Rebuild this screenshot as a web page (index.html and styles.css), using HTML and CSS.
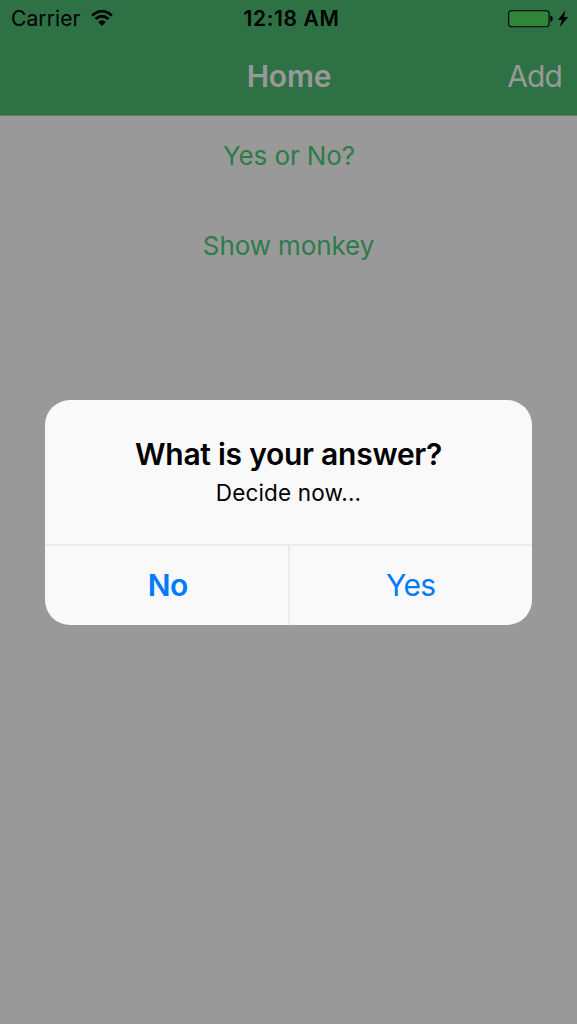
FILE: index.html
```html
<!DOCTYPE html>
<html lang="en">
<head>
<meta charset="utf-8">
<title>Home</title>
<link rel="stylesheet" href="styles.css">
</head>
<body>
<div class="screen">
  <header class="header">
    <div class="status">
      <div class="status-left">
        <span class="carrier">Carrier</span>
        <svg class="wifi" width="22" height="17" viewBox="0 0 22 17">
          <path d="M1.1 5.6Q11-3.2 20.9 5.6M4.5 9.1Q11 3.4 17.5 9.1" fill="none" stroke="#000" stroke-width="2.7"/>
          <path d="M7.2 12Q11 8.7 14.8 12L11 16Z"/>
        </svg>
      </div>
      <span class="time">12:18 AM</span>
      <div class="status-right">
        <svg width="61" height="19" viewBox="0 0 61 19">
          <rect x=".7" y="1.7" width="40.3" height="16" rx="2.6" fill="#31863c" stroke="#000" stroke-width="1.1"/>
          <path d="M42.3 6.5Q44.8 7 44.8 9.7T42.3 12.9Z"/>
          <path d="M57.4 1.3L50 10.9H53.9L51.7 18L60.4 8H56Z"/>
        </svg>
      </div>
    </div>
    <nav class="nav">
      <h1 class="nav-title">Home</h1>
      <a class="nav-add">Add</a>
    </nav>
  </header>
  <main class="links">
    <a class="link link-question">Yes or No?</a>
    <a class="link link-monkey">Show monkey</a>
  </main>
  <div class="overlay">
    <section class="alert" role="alertdialog">
      <div class="alert-body">
        <h2 class="alert-title">What is your answer?</h2>
        <p class="alert-text">Decide now...</p>
      </div>
      <div class="alert-actions">
        <button class="action action-no">No</button>
        <button class="action action-yes">Yes</button>
      </div>
    </section>
  </div>
</div>
</body>
</html>
```
FILE: styles.css
```css
* { box-sizing: border-box; }
body, h1, h2, p { margin: 0; }
body { font-family: Inter, "Liberation Sans", sans-serif; }
.screen {
  position: relative;
  height: 1024px;
  overflow: hidden;
  background: #999;
}
.header {
  height: 116px;
  background: #2d7144;
  border-bottom: 1px solid #5b7e66;
}
.status {
  display: grid;
  grid-template-columns: 1fr auto 1fr;
  align-items: center;
  height: 37px;
  padding: 0 8px 0 11px;
  font-size: 21px;
  line-height: 37px;
}
.status-left { display: flex; align-items: center; gap: 10px; }
.status-right { display: flex; justify-content: flex-end; }
.carrier { letter-spacing: 0.1px; }
.time { padding-left: 3px; font-weight: 600; letter-spacing: 0.65px; }
.nav {
  display: grid;
  grid-template-columns: 1fr auto 1fr;
  align-items: center;
  height: 78px;
  padding: 0 15px;
  font-size: 30px;
  line-height: 78px;
  color: #999;
}
.nav-title {
  grid-column: 2;
  padding-left: 1px;
  font-size: 30px;
  font-weight: 600;
  letter-spacing: -0.2px;
}
.nav-add { justify-self: end; letter-spacing: -0.9px; }
.links {
  display: flex;
  flex-direction: column;
  align-items: center;
  padding-top: 10px;
}
.link {
  height: 60px;
  margin-bottom: 30px;
  font-size: 26px;
  line-height: 60px;
  letter-spacing: -0.1px;
  color: #2d7b49;
}
.link-question { padding-left: 1px; }
.overlay {
  position: absolute;
  inset: 0;
  display: flex;
  align-items: center;
  justify-content: center;
}
.alert {
  display: flex;
  flex-direction: column;
  width: 487px;
  height: 225px;
  overflow: hidden;
  border-radius: 25px;
  background: #f9f9f9;
  text-align: center;
}
.alert-body { height: 144px; padding-top: 35px; }
.alert-title {
  font-size: 30px;
  font-weight: 600;
  line-height: 38px;
  letter-spacing: -0.25px;
}
.alert-text { font-size: 22.5px; line-height: 40px; letter-spacing: 0.15px; }
.alert-actions {
  display: grid;
  grid-template-columns: 1fr 1fr;
  height: 81px;
  border-top: 2px solid #ebebec;
}
.action {
  padding: 0;
  border: 0;
  background: none;
  font: 400 30px/79px Inter, "Liberation Sans", sans-serif;
  letter-spacing: -0.6px;
  color: #007aff;
}
.action-no {
  padding-left: 3px;
  border-right: 1px solid #ebebec;
  font-weight: 600;
  letter-spacing: -0.4px;
}
.action-yes { border-left: 1px solid #ebebec; }
```
